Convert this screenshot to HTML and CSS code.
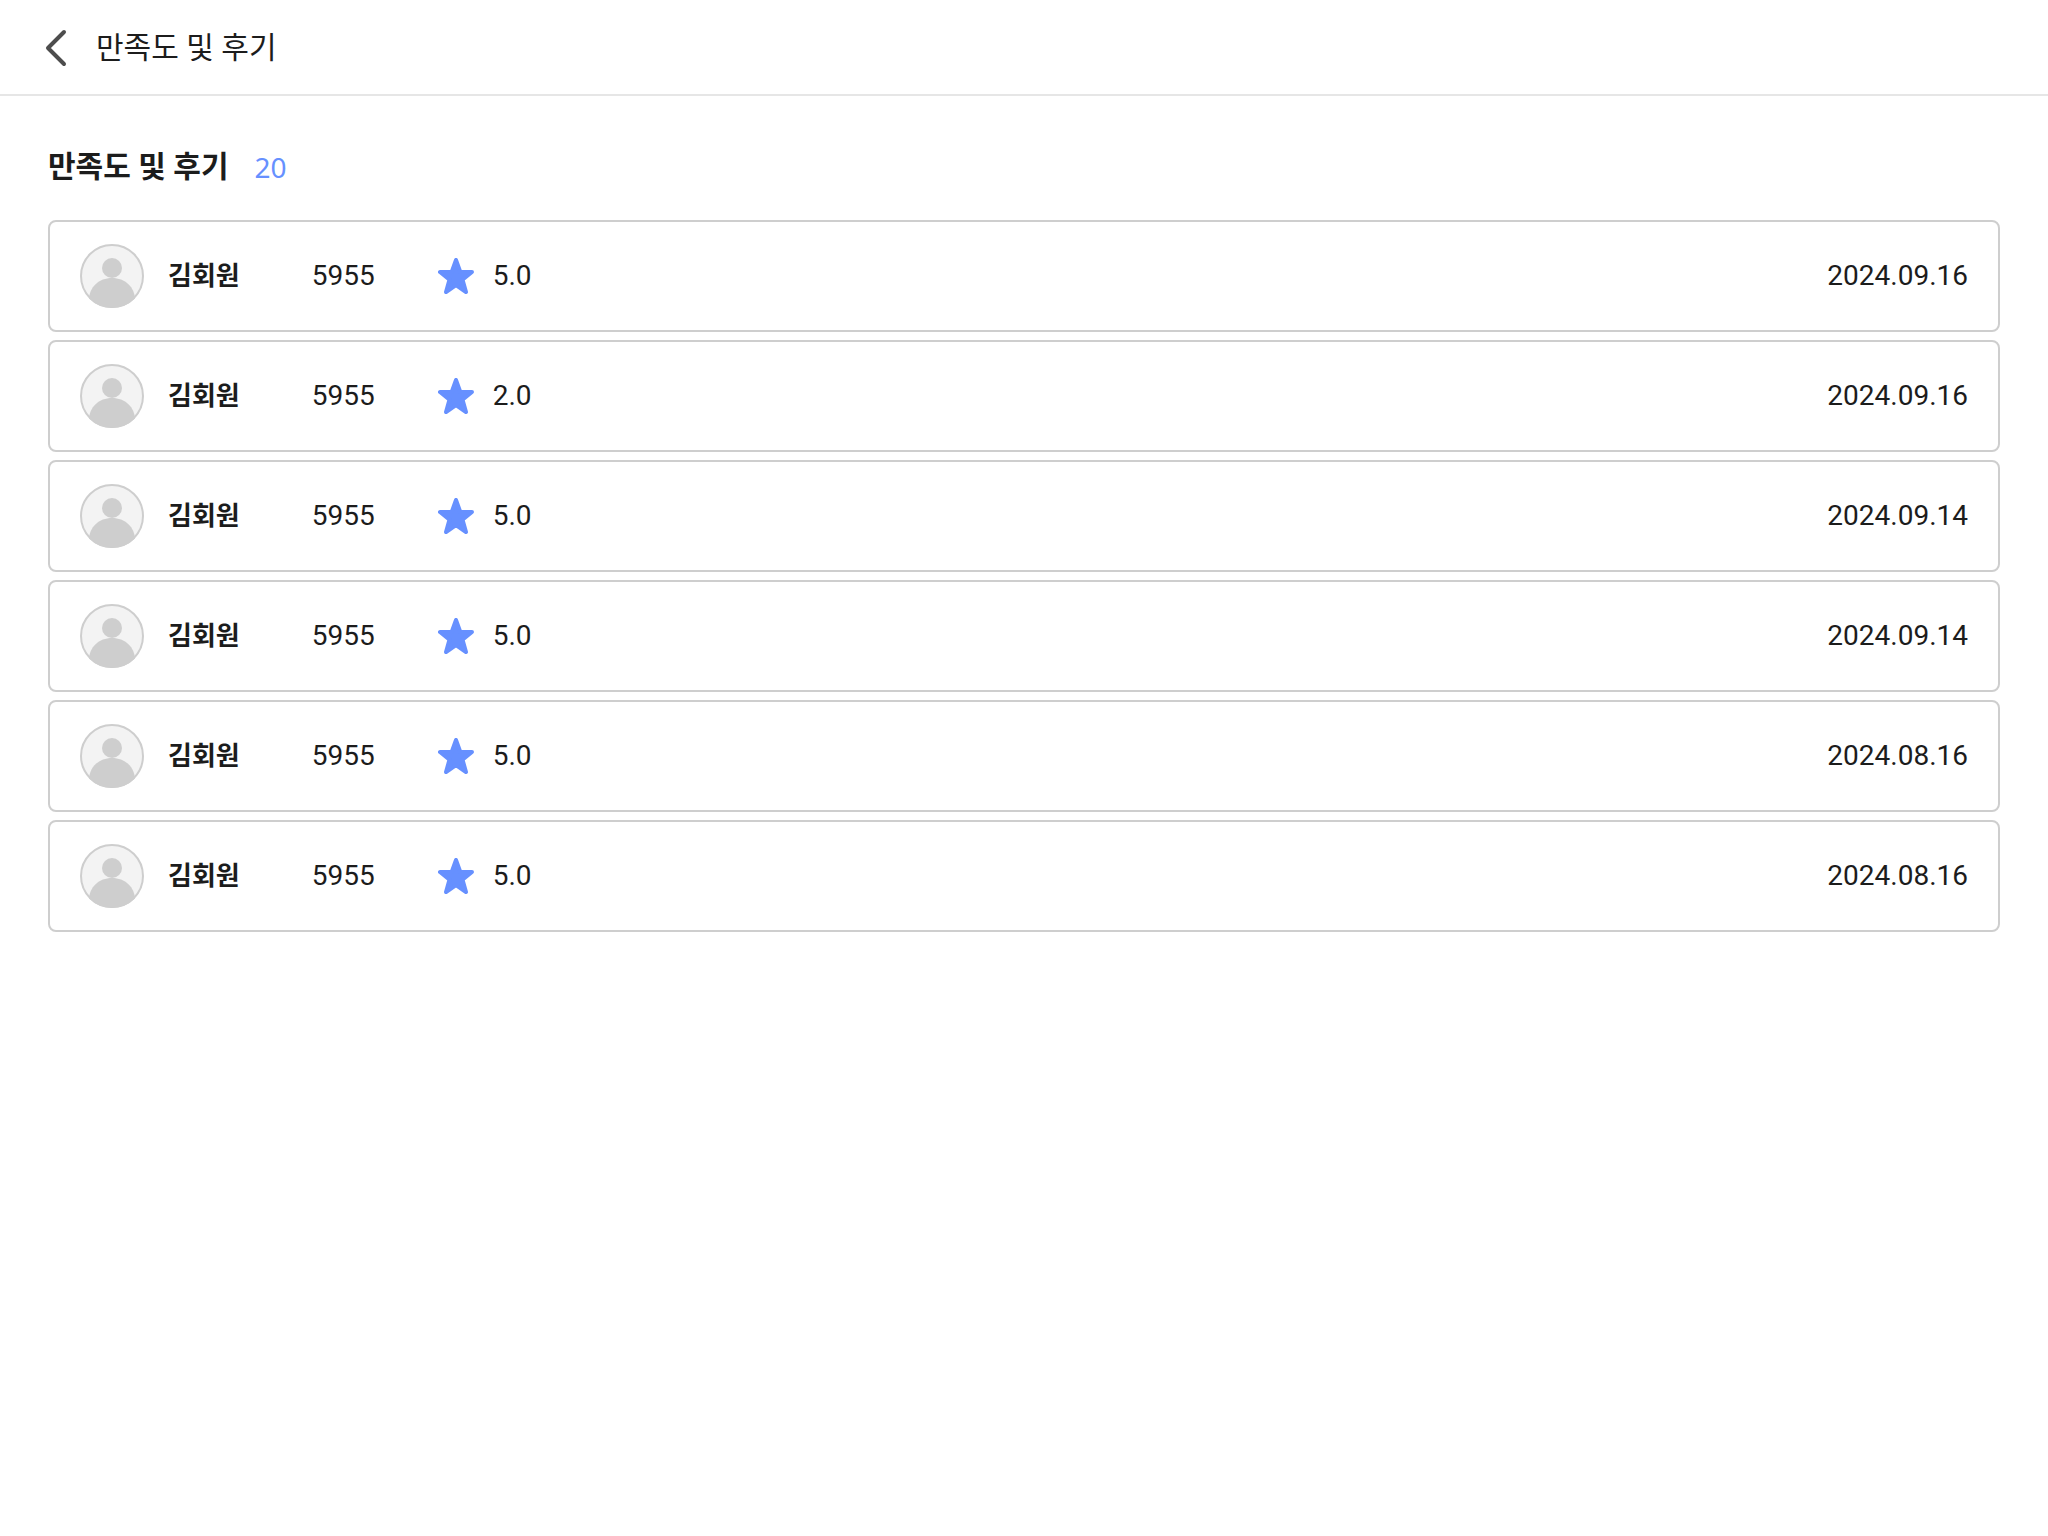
FILE: index.html
```html
<!DOCTYPE html>
<html lang="ko">
<head>
    <meta charset="UTF-8">
    <meta name="viewport" content="width=device-width, initial-scale=1.0">
    <title>만족도 및 후기</title>
    <link rel="stylesheet" href="styles.css">
</head>
<body>
    <!-- 공통 아이콘 -->
    <svg class="symbols" aria-hidden="true">
        <symbol id="icon-user" viewBox="0 0 64 64">
            <clipPath id="avatar-clip"><circle cx="32" cy="32" r="32"/></clipPath>
            <circle cx="32" cy="32" r="31" fill="#f3f3f3" stroke="#cecece" stroke-width="2"/>
            <g fill="#cecece" clip-path="url(#avatar-clip)">
                <circle cx="32" cy="24" r="10"/>
                <path d="M9 56C9 43 19 34 32 34S55 43 55 56V64H9Z"/>
            </g>
        </symbol>
        <symbol id="icon-star" viewBox="0 0 36 36">
            <path d="M18 2 22.3 14H34L24.5 21.6 28 34 18 27 8 34 11.5 21.6 2 14H13.7Z" fill="#6690ff" stroke="#6690ff" stroke-width="4" stroke-linejoin="round"/>
        </symbol>
    </svg>

    <header class="header">
        <button type="button" class="back" aria-label="뒤로">
            <svg width="24" height="40" viewBox="0 0 24 40">
                <path d="M20 4 4 20 20 36" fill="none" stroke="#4d4d4d" stroke-width="4" stroke-linecap="round" stroke-linejoin="round"/>
            </svg>
        </button>
        <h1 class="header-title">만족도 및 후기</h1>
    </header>

    <main class="content">
        <div class="list-head">
            <h2 class="list-title">만족도 및 후기</h2>
            <span class="count">20</span>
        </div>
        <ul class="review-list">
            <li class="review">
                <svg class="avatar"><use href="#icon-user"/></svg>
                <strong class="name">김회원</strong>
                <span class="phone">5955</span>
                <svg class="star"><use href="#icon-star"/></svg>
                <span class="score">5.0</span>
                <time class="date">2024.09.16</time>
            </li>
            <li class="review">
                <svg class="avatar"><use href="#icon-user"/></svg>
                <strong class="name">김회원</strong>
                <span class="phone">5955</span>
                <svg class="star"><use href="#icon-star"/></svg>
                <span class="score">2.0</span>
                <time class="date">2024.09.16</time>
            </li>
            <li class="review">
                <svg class="avatar"><use href="#icon-user"/></svg>
                <strong class="name">김회원</strong>
                <span class="phone">5955</span>
                <svg class="star"><use href="#icon-star"/></svg>
                <span class="score">5.0</span>
                <time class="date">2024.09.14</time>
            </li>
            <li class="review">
                <svg class="avatar"><use href="#icon-user"/></svg>
                <strong class="name">김회원</strong>
                <span class="phone">5955</span>
                <svg class="star"><use href="#icon-star"/></svg>
                <span class="score">5.0</span>
                <time class="date">2024.09.14</time>
            </li>
            <li class="review">
                <svg class="avatar"><use href="#icon-user"/></svg>
                <strong class="name">김회원</strong>
                <span class="phone">5955</span>
                <svg class="star"><use href="#icon-star"/></svg>
                <span class="score">5.0</span>
                <time class="date">2024.08.16</time>
            </li>
            <li class="review">
                <svg class="avatar"><use href="#icon-user"/></svg>
                <strong class="name">김회원</strong>
                <span class="phone">5955</span>
                <svg class="star"><use href="#icon-star"/></svg>
                <span class="score">5.0</span>
                <time class="date">2024.08.16</time>
            </li>
        </ul>
    </main>
</body>
</html>
```
FILE: styles.css
```css
* {
    box-sizing: border-box;
}
body {
    margin: 0;
    background-color: #fff;
    color: #1c1c1c;
    font-family: Roboto, "Noto Sans CJK KR", sans-serif;
    font-size: 28px;
    line-height: 42px;
}
h1, h2, ul {
    margin: 0;
    padding: 0;
}
.symbols {
    position: absolute;
    width: 0;
    height: 0;
}

/* 상단 바 */
.header {
    display: flex;
    align-items: center;
    gap: 28px;
    padding: 27px 44px 25px;
    border-bottom: 2px solid #e6e6e6;
}
.back {
    display: flex;
    padding: 0;
    border: none;
    background: none;
    cursor: pointer;
}
.header-title {
    font-size: 30px;
    font-weight: 400;
}

/* 후기 목록 */
.content {
    padding: 50px 48px;
}
.list-head {
    display: flex;
    align-items: center;
    gap: 26px;
    margin-bottom: 32px;
}
.list-title {
    font-size: 30px;
    font-weight: 700;
}
.count {
    color: #6690ff;
    font-family: "Noto Sans", sans-serif;
    font-weight: 400;
}
.review-list {
    display: flex;
    flex-direction: column;
    gap: 8px;
    list-style: none;
}
.review {
    display: flex;
    align-items: center;
    padding: 22px 30px;
    border: 2px solid #cecece;
    border-radius: 8px;
}
.avatar {
    width: 64px;
    height: 64px;
    margin-right: 24px;
}
.name {
    font-size: 26px;
    font-weight: 700;
}
.phone {
    margin: 0 63px 0 72px;
}
.star {
    width: 36px;
    height: 36px;
    margin-right: 19px;
}
.date {
    margin-left: auto;
}
```
